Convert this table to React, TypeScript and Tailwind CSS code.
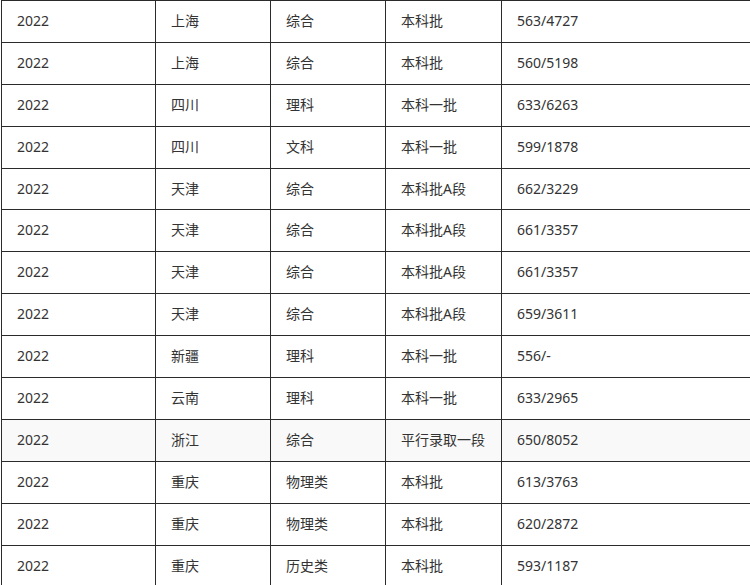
import React from "react";

const rows: [string, string, string, string, string][] = [
  ["2022", "上海", "综合", "本科批", "563/4727"],
  ["2022", "上海", "综合", "本科批", "560/5198"],
  ["2022", "四川", "理科", "本科一批", "633/6263"],
  ["2022", "四川", "文科", "本科一批", "599/1878"],
  ["2022", "天津", "综合", "本科批A段", "662/3229"],
  ["2022", "天津", "综合", "本科批A段", "661/3357"],
  ["2022", "天津", "综合", "本科批A段", "661/3357"],
  ["2022", "天津", "综合", "本科批A段", "659/3611"],
  ["2022", "新疆", "理科", "本科一批", "556/-"],
  ["2022", "云南", "理科", "本科一批", "633/2965"],
  ["2022", "浙江", "综合", "平行录取一段", "650/8052"],
  ["2022", "重庆", "物理类", "本科批", "613/3763"],
  ["2022", "重庆", "物理类", "本科批", "620/2872"],
  ["2022", "重庆", "历史类", "本科批", "593/1187"],
];

const widths = ["w-[154px]", "w-[115px]", "w-[115px]", "w-[116px]", "w-[300px]"];

export default function App() {
  return (
    <div className="w-[750px] h-[585px] overflow-hidden bg-white pl-px">
      <table
        className="border-collapse table-fixed w-[800px] text-[14px] text-[#333]"
        style={{ fontFamily: '"Noto Sans", "Noto Sans CJK SC", sans-serif' }}
      >
        <colgroup>
          {widths.map((w, i) => (
            <col key={i} className={w} />
          ))}
        </colgroup>
        <tbody>
          {rows.map((r, i) => (
            <tr key={i} className={i === 10 ? "bg-[#f9f9f9]" : "bg-white"}>
              {r.map((c, j) => (
                <td
                  key={j}
                  className="border border-[#2b2b2b] h-[41.9px] pl-[15px] pr-2 pt-0 pb-px align-middle leading-5 whitespace-nowrap"
                >
                  {c}
                </td>
              ))}
            </tr>
          ))}
        </tbody>
      </table>
    </div>
  );
}
